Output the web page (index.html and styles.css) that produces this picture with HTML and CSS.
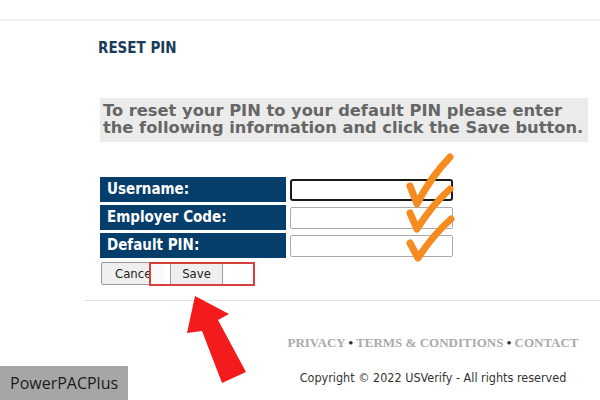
FILE: index.html
```html
<!DOCTYPE html>
<html lang="en">
<head>
<meta charset="utf-8">
<title>Reset PIN</title>
<link rel="stylesheet" href="styles.css">
</head>
<body>
<header class="topbar"></header>
<main class="content">
  <h1 class="title">RESET PIN</h1>
  <p class="intro">To reset your PIN to your default PIN please enter<br>the following information and click the Save button.</p>
  <form class="form">
    <div class="grid">
      <label class="label">Username:</label>
      <input class="field focused" type="text">
      <label class="label">Employer Code:</label>
      <input class="field" type="text">
      <label class="label">Default PIN:</label>
      <input class="field" type="password">
    </div>
    <div class="buttons">
      <button type="button" class="btn cancel">Cancel</button>
      <button type="button" class="btn save">Save</button>
    </div>
  </form>
</main>
<hr class="rule">
<footer class="footer">
  <nav class="links"><a>PRIVACY</a> <span class="dot">&bull;</span> <a>TERMS &amp; CONDITIONS</a> <span class="dot">&bull;</span> <a>CONTACT</a></nav>
  <p class="copy">Copyright &copy; 2022 USVerify - All rights reserved</p>
</footer>

<div class="redbox"></div>
<svg class="annot" width="600" height="400" viewBox="0 0 600 400">
  <g fill="none" stroke="#f68b1f" stroke-width="7" stroke-linecap="round" stroke-linejoin="round">
    <path d="M410 186 L417 204 Q430 178 450 157"/>
    <path d="M410 213 L417 229 Q432 205 450 189"/>
    <path d="M410 243 L418 258 Q433 235 451 219"/>
  </g>
  <polygon fill="#f31b1b" points="195,296 229,314 218,320 246,372 222,383 202,331 187,333"/>
</svg>
<div class="brand">PowerPACPlus</div>
</body>
</html>
```
FILE: styles.css
```css
html, body {
  margin: 0;
  padding: 0;
  background: #fff;
  width: 600px;
  height: 400px;
  overflow: hidden;
  position: relative;
}
.topbar {
  height: 19px;
  border-bottom: 2px solid #efefef;
}
.content {
  padding-left: 100px;
}
.title {
  margin: 18px 0 0 -2px;
  font-family: "DejaVu Sans Condensed", "DejaVu Sans", sans-serif;
  font-weight: bold;
  font-size: 15px;
  line-height: 18px;
  color: #1b3b5a;
}
.intro {
  margin: 41px 0 0 0;
  width: 485px;
  padding: 4px 0 6px 3px;
  background: #ebebeb;
  color: #666;
  font-family: "DejaVu Sans", sans-serif;
  font-weight: bold;
  font-size: 16.3px;
  line-height: 17px;
  white-space: nowrap;
}
.form {
  margin: 35px 0 0 0;
}
.grid {
  display: grid;
  grid-template-columns: 186px 163px;
  grid-auto-rows: 25px;
  column-gap: 4px;
  row-gap: 3px;
}
.label {
  background: #053d6b;
  color: #fff;
  font-family: "DejaVu Sans Condensed", "DejaVu Sans", sans-serif;
  font-weight: bold;
  font-size: 15px;
  line-height: 25px;
  padding-left: 7px;
}
.field {
  box-sizing: border-box;
  margin: 2px 0 1px 0;
  height: 22px;
  width: 163px;
  border: 1px solid #ababab;
  border-radius: 2px;
  background: #fff;
  padding: 0;
}
.field.focused {
  border: 2px solid #1a1a1a;
  border-radius: 3px;
}
.buttons {
  display: flex;
  gap: 6px;
  margin-top: 4px;
  margin-left: 1px;
}
.btn {
  box-sizing: border-box;
  height: 23px;
  background: #efefef;
  border: 1px solid #9a9a9a;
  border-radius: 2px;
  font-family: "DejaVu Sans Condensed", "DejaVu Sans", sans-serif;
  font-size: 13px;
  color: #222;
  padding: 0;
}
.cancel { width: 63px; padding-left: 13px; text-align: left; }
.save { width: 53px; }
.rule {
  margin: 15px 0 0 85px;
  border: 0;
  border-top: 1px solid #e3e3e3;
  height: 0;
}
.footer {
  padding-left: 266px;
  text-align: center;
}
.links {
  margin-top: 34px;
  font-family: "Liberation Serif", serif;
  font-weight: bold;
  font-size: 13px;
  line-height: 15px;
  color: #aaa;
}
.dot { color: #333; }
.copy {
  margin: 20px 0 0 0;
  font-family: "DejaVu Sans Condensed", "DejaVu Sans", sans-serif;
  font-size: 12.5px;
  line-height: 15px;
  color: #333;
}
.redbox {
  position: absolute;
  left: 149px;
  top: 262px;
  width: 102px;
  height: 20px;
  border: 2px solid #d8403c;
  background: linear-gradient(to right, #fafafa 0 13px, transparent 13px);
}
.annot {
  position: absolute;
  left: 0;
  top: 0;
  pointer-events: none;
}
.brand {
  position: absolute;
  left: 0;
  top: 366px;
  width: 118px;
  height: 34px;
  padding-left: 10px;
  background: #a6a6a6;
  color: #1a1a1a;
  font-family: "Open Sans", sans-serif;
  font-size: 16px;
  line-height: 34px;
}
```
